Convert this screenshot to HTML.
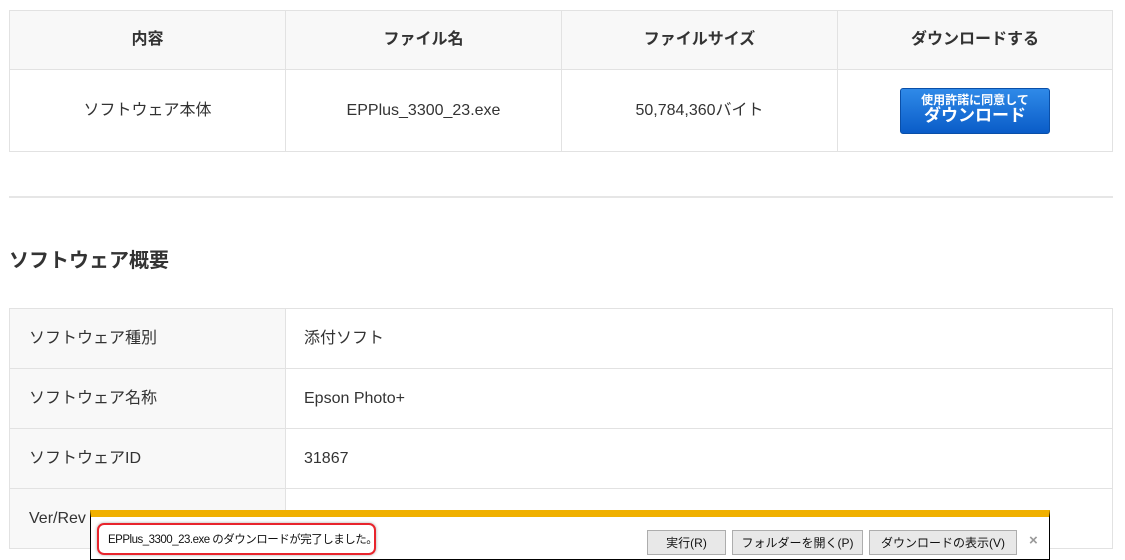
<!DOCTYPE html>
<html><head><meta charset="utf-8"><style>
*{margin:0;padding:0;box-sizing:border-box}
html,body{width:1125px;height:560px;overflow:hidden}
body{background:#fff;font-family:"Liberation Sans","Noto Sans CJK JP",sans-serif;color:#333;position:relative}
.c{position:absolute;border:1px solid #e2e2e2;display:flex;align-items:center;font-size:16px;line-height:20px}
.c span{display:block;height:20px;line-height:20px}
.h{background:#f8f8f8;font-weight:bold;justify-content:center}
.m{justify-content:center}
.l{background:#f8f8f8;padding-left:19px}
.r{padding-left:18px}
.btn{width:150px;height:46px;border-radius:3px;background:linear-gradient(#2f8ae8,#0a5cc8);color:#fff;font-weight:bold;text-align:center;line-height:1.1;padding-top:5px;border:1px solid #0a4fa8}
.bar{position:absolute;left:90px;top:510px;width:960px;height:50px;border:1px solid #000;background:#fff;border-top:7px solid #f0b000}
.b{position:absolute;top:13px;height:25px;border:1px solid #adadad;background:#e8e8e8;font-size:12px;display:flex;align-items:center;justify-content:center;color:#111;white-space:nowrap}
</style></head><body>
<div class="c h" style="left:9px;top:10px;width:277px;height:60px"><span>内容</span></div>
<div class="c h" style="left:285px;top:10px;width:277px;height:60px"><span>ファイル名</span></div>
<div class="c h" style="left:561px;top:10px;width:277px;height:60px"><span>ファイルサイズ</span></div>
<div class="c h" style="left:837px;top:10px;width:276px;height:60px"><span>ダウンロードする</span></div>
<div class="c m" style="left:9px;top:69px;width:277px;height:83px"><span>ソフトウェア本体</span></div>
<div class="c m" style="left:285px;top:69px;width:277px;height:83px"><span>EPPlus_3300_23.exe</span></div>
<div class="c m" style="left:561px;top:69px;width:277px;height:83px"><span>50,784,360バイト</span></div>
<div class="c m" style="left:837px;top:69px;width:276px;height:83px"><div class="btn"><div style="font-size:12px">使用許諾に同意して</div><div style="font-size:17px">ダウンロード</div></div></div>
<div style="position:absolute;left:9px;top:196px;width:1104px;height:2px;background:#e6e6e6"></div>
<div style="position:absolute;left:9px;top:244px;font-size:20px;font-weight:bold;color:#333">ソフトウェア概要</div>
<div class="c l" style="left:9px;top:308px;width:277px;height:61px"><span>ソフトウェア種別</span></div>
<div class="c r" style="left:285px;top:308px;width:828px;height:61px"><span>添付ソフト</span></div>
<div class="c l" style="left:9px;top:368px;width:277px;height:61px"><span>ソフトウェア名称</span></div>
<div class="c r" style="left:285px;top:368px;width:828px;height:61px"><span>Epson Photo+</span></div>
<div class="c l" style="left:9px;top:428px;width:277px;height:61px"><span>ソフトウェアID</span></div>
<div class="c r" style="left:285px;top:428px;width:828px;height:61px"><span>31867</span></div>
<div class="c l" style="left:9px;top:488px;width:277px;height:61px"><span>Ver/Rev</span></div>
<div class="c r" style="left:285px;top:488px;width:828px;height:61px"></div>
<div class="bar">
<div style="position:absolute;left:6px;top:6px;width:279px;height:32px;border:2px solid #e8242c;border-radius:7px;box-shadow:0 0 3px #aaa;font-size:11.5px;color:#111;display:flex;align-items:center;padding-left:9px;white-space:nowrap;letter-spacing:-0.5px">EPPlus_3300_23.exe のダウンロードが完了しました。</div>
<div class="b" style="left:556px;width:79px">実行(R)</div>
<div class="b" style="left:641px;width:131px">フォルダーを開く(P)</div>
<div class="b" style="left:778px;width:148px">ダウンロードの表示(V)</div>
<div style="position:absolute;left:938px;top:15px;font-size:15px;color:#999;font-weight:bold">×</div>
</div>
</body></html>
